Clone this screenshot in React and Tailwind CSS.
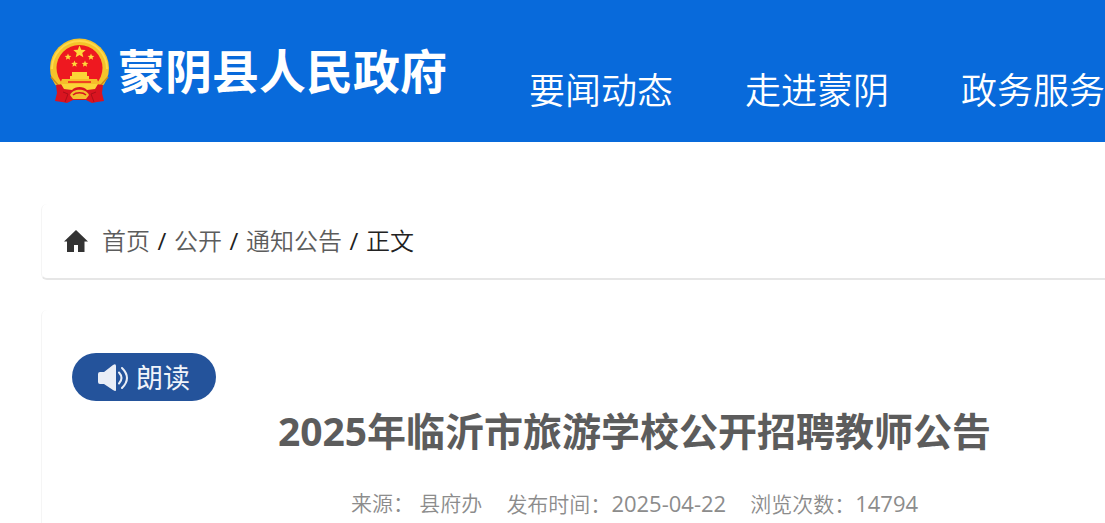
const navItems = ['要闻动态', '走进蒙阴', '政务服务']

const crumbs = ['首页', '公开', '通知公告']

const cardBase = 'rounded-md border-l border-[#f5f5f5] bg-white'

function Star({ x, y, r }) {
  const points = Array.from({ length: 10 }, (_, i) => {
    const radius = i % 2 === 0 ? r : r * 0.45
    const angle = (Math.PI / 5) * i - Math.PI / 2
    return `${x + radius * Math.cos(angle)},${y + radius * Math.sin(angle)}`
  }).join(' ')
  return <polygon points={points} fill="#ffd83a" />
}

function Emblem() {
  return (
    <svg viewBox="0 0 60 66" className="h-[66px] w-[60px] shrink-0" aria-hidden="true">
      <circle cx="29.500" cy="30" r="29.500" fill="#f4c32a" />
      <path d="M2 31C2 16 14 3 29.500 3S57 16 57 31" stroke="#ffd94a" strokeWidth="2" fill="none" />
      <path d="M1 39l8 9M58 39l-8 9" stroke="#c98a1c" strokeWidth="1.500" fill="none" />
      <circle cx="29.500" cy="30" r="23" fill="#ee1820" />
      <Star x={29.5} y={14} r={6.5} />
      <Star x={18} y={19} r={3.5} />
      <Star x={41} y={19} r={3.5} />
      <Star x={24.5} y={26} r={3.5} />
      <Star x={35} y={26} r={3.5} />
      <path d="M22 34h15v4h2v3H20v-3h2z" fill="#fbd437" />
      <path d="M12 41h35l2 5H10z" fill="#f6bd2a" />
      <path d="M18 44h23" stroke="#ee1820" strokeWidth="1.500" />
      <path d="M6 47l7-1h33l7 1-1 8 2 8-7 1-5 1-6-3H23l-6 3-5-1-7-1 2-8z" fill="#d91420" />
      <path d="M11 46h37l-3 5-8 1c-3-4-12-4-15 0l-8-1z" fill="#fbd437" />
      <path d="M20 57c3-7 16-7 19 0l-3 4H23z" fill="#f3bf2d" />
      <path d="M23 57c3-3 10-3 13 0" stroke="#d91420" strokeWidth="1.500" fill="none" />
      <path d="M13 54l5 2-3 8M46 54l-5 2 3 8" stroke="#ad0e18" fill="none" />
    </svg>
  )
}

function HomeIcon() {
  return (
    <svg viewBox="0 0 24 22" className="h-[22px] w-6 shrink-0" fill="#333" aria-hidden="true">
      <path d="M12 0 24 11.500h-3.500V22H14v-7h-4v7H3V11.500H0z" />
    </svg>
  )
}

function SpeakerIcon() {
  return (
    <svg viewBox="0 0 31 28" className="h-7 w-[31px] shrink-0" aria-hidden="true">
      <path d="M2 9h4L15 2q3-2 3 1v24q0 2-3 0L6 21H2q-2 0-2-2v-8q0-2 2-2z" fill="#e9eef7" />
      <path d="M21 9.500q5 5.500 0 11M24 5q10 10 0 20" stroke="#e9eef7" strokeWidth="2" fill="none" strokeLinecap="round" />
    </svg>
  )
}

export default function App() {
  return (
    <div className="overflow-hidden bg-white font-['Open_Sans','Noto_Sans_CJK_SC',sans-serif]">
      <header className="flex h-[142px] items-center overflow-hidden bg-[#086adb] pl-[50px] text-white">
        <a href="#" className="flex shrink-0 items-center gap-2">
          <Emblem />
          <span className="text-[47px] leading-[66px] font-bold whitespace-nowrap">蒙阴县人民政府</span>
        </a>
        <nav className="ml-[82px] flex shrink-0 gap-[72px] pt-10">
          {navItems.map((item) => (
            <a key={item} href="#" className="text-4xl font-[350] whitespace-nowrap">
              {item}
            </a>
          ))}
        </nav>
      </header>

      <main className="-mr-[122px] pt-[62px] pl-[41px]">
        <nav
          aria-label="当前位置"
          className={`${cardBase} flex h-[76px] items-center border-b-2 border-b-[#e6e6e6] pl-[22px] text-2xl font-[350] text-[#222]`}
        >
          <HomeIcon />
          <ol className="ml-3.5 flex">
            {crumbs.map((crumb) => (
              <li key={crumb} className="flex">
                <a href="#" className="text-[#5c5c5c]">{crumb}</a>
                <span className="w-6 text-center font-normal">/</span>
              </li>
            ))}
            <li aria-current="page">正文</li>
          </ol>
        </nav>

        <article className={`${cardBase} mt-[30px] pt-[43px] pb-4`}>
          <button className="ml-[30px] flex h-12 w-36 items-center justify-center gap-[7px] rounded-full bg-[#24539b] text-[27px] leading-none text-[#f0f4fa]">
            <SpeakerIcon />
            朗读
          </button>
          <h1 className="mt-1.5 text-center text-[39px] leading-[48px] font-bold text-[#5c5c5c]">
            2025年临沂市旅游学校公开招聘教师公告
          </h1>
          <p className="mt-8 flex justify-center gap-6 text-[21px] leading-8 font-[350] text-[#8c8c8c]">
            <span>来源： 县府办</span>
            <span>
              发布时间：<span className="text-[22px] font-normal">2025-04-22</span>
            </span>
            <span>
              浏览次数：<span className="text-[22px] font-normal">14794</span>
            </span>
          </p>
        </article>
      </main>
    </div>
  )
}
